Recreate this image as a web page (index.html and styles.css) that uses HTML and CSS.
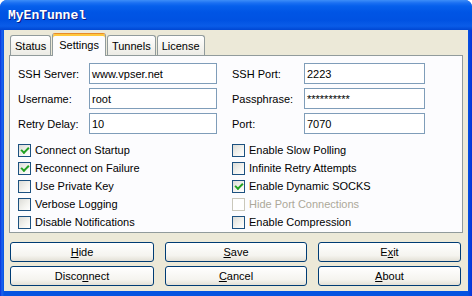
FILE: index.html
```html
<!DOCTYPE html>
<html lang="en">
<head>
    <meta charset="UTF-8">
    <title>MyEnTunnel</title>
    <link rel="stylesheet" href="styles.css">
</head>
<body>
    <div class="window">
        <div class="titlebar">
            <span class="title">MyEnTunnel</span>
        </div>

        <div class="client">
            <div class="tabs">
                <div class="tab">Status</div>
                <div class="tab active">Settings</div>
                <div class="tab">Tunnels</div>
                <div class="tab">License</div>
            </div>

            <div class="panel">
                <div class="form-row">
                    <div class="form left">
                        <span class="label">SSH Server:</span>
                        <div class="field">www.vpser.net</div>
                        <span class="label">Username:</span>
                        <div class="field">root</div>
                        <span class="label">Retry Delay:</span>
                        <div class="field">10</div>
                    </div>
                    <div class="form right">
                        <span class="label">SSH Port:</span>
                        <div class="field">2223</div>
                        <span class="label">Passphrase:</span>
                        <div class="field">**********</div>
                        <span class="label">Port:</span>
                        <div class="field">7070</div>
                    </div>
                </div>

                <div class="options">
                    <div class="option-col left">
                        <div class="check checked"><span class="box"></span>Connect on Startup</div>
                        <div class="check checked"><span class="box"></span>Reconnect on Failure</div>
                        <div class="check"><span class="box"></span>Use Private Key</div>
                        <div class="check"><span class="box"></span>Verbose Logging</div>
                        <div class="check"><span class="box"></span>Disable Notifications</div>
                    </div>
                    <div class="option-col">
                        <div class="check"><span class="box"></span>Enable Slow Polling</div>
                        <div class="check"><span class="box"></span>Infinite Retry Attempts</div>
                        <div class="check checked"><span class="box"></span>Enable Dynamic SOCKS</div>
                        <div class="check disabled"><span class="box"></span>Hide Port Connections</div>
                        <div class="check"><span class="box"></span>Enable Compression</div>
                    </div>
                </div>
            </div>

            <div class="buttons">
                <button class="btn"><u>H</u>ide</button>
                <button class="btn"><u>S</u>ave</button>
                <button class="btn">E<u>x</u>it</button>
                <button class="btn">Disco<u>n</u>nect</button>
                <button class="btn"><u>C</u>ancel</button>
                <button class="btn"><u>A</u>bout</button>
            </div>
        </div>
    </div>
</body>
</html>
```

FILE: styles.css
```css
* {
    margin: 0;
    padding: 0;
    box-sizing: border-box;
}

body {
    font-family: 'Liberation Sans', Arial, sans-serif;
    font-size: 11px;
    background: #ffffff;
    width: 472px;
    height: 296px;
    overflow: hidden;
}

.window {
    width: 472px;
    height: 296px;
    display: flex;
    flex-direction: column;
    padding: 0 4px 5px;
    background: linear-gradient(to right, #0831d9 0, #1c64f0 2px, #0553e1 4px, #0553e1 calc(100% - 4px), #0831d9 100%);
    border-radius: 7px 7px 0 0;
}

.titlebar {
    height: 30px;
    margin: 0 -4px;
    padding-left: 8px;
    display: flex;
    align-items: center;
    border-radius: 7px 7px 0 0;
    background: linear-gradient(#3d8ef8 0, #1a6ff2 3px, #0660ec 6px, #0055e5 12px, #0052e2 20px, #0a5ce8 26px, #0046d2 30px);
}

.title {
    font-family: 'Liberation Mono', monospace;
    font-weight: bold;
    font-size: 13px;
    color: #ffffff;
    text-shadow: 1px 1px 0 #0a1883;
}

.client {
    flex: 1;
    background: #ece9d8;
    padding: 3px 5px 5px 5px;
    display: flex;
    flex-direction: column;
}

.tabs {
    height: 22px;
    display: flex;
    align-items: flex-end;
    gap: 1px;
    padding-left: 1px;
    position: relative;
    z-index: 1;
}

.tab {
    height: 20px;
    padding: 0 4px;
    display: flex;
    align-items: center;
    border: 1px solid #919b9c;
    border-bottom: none;
    border-radius: 3px 3px 0 0;
    background: linear-gradient(#ffffff, #f4f3ee 60%, #ecebe5);
    color: #000000;
}

.tab.active {
    height: 23px;
    margin-bottom: -1px;
    padding: 0 6px;
    background: #fcfcfe;
    border-top-color: #e68b2c;
    box-shadow: inset 0 2px 0 #ffc73c;
}

.panel {
    height: 178px;
    background: #fcfcfe;
    border: 1px solid #919b9c;
    padding: 7px 8px 0;
}

.form-row {
    display: flex;
    gap: 15px;
}

.form {
    display: grid;
    grid-auto-rows: 21px;
    row-gap: 4px;
    align-items: center;
}

.form.left {
    grid-template-columns: 71px 128px;
}

.form.right {
    grid-template-columns: 72px 121px;
}

.label {
    color: #000000;
}

.field {
    height: 21px;
    border: 1px solid #7f9db9;
    background: #ffffff;
    padding-left: 2px;
    display: flex;
    align-items: center;
}

.options {
    display: flex;
    margin-top: 7px;
}

.option-col.left {
    width: 214px;
}

.check {
    height: 18px;
    display: flex;
    align-items: center;
    gap: 4px;
    color: #000000;
}

.box {
    width: 13px;
    height: 13px;
    border: 1px solid #1c5180;
    background: linear-gradient(135deg, #dcdcd7, #f4f4f0 60%, #ffffff);
    display: flex;
    align-items: center;
    justify-content: center;
}

.check.checked .box::after {
    content: "";
    width: 6px;
    height: 3px;
    margin-top: -2px;
    border-left: 2px solid #21a121;
    border-bottom: 2px solid #21a121;
    transform: rotate(-45deg);
}

.check.disabled {
    color: #aca899;
}

.check.disabled .box {
    border-color: #cac8bb;
    background: #ffffff;
}

.buttons {
    margin-top: 9px;
    display: grid;
    grid-template-columns: 144px 142px 143px;
    column-gap: 11px;
    row-gap: 4px;
    padding-left: 1px;
}

.btn {
    height: 20px;
    border: 1px solid #003c74;
    border-radius: 3px;
    background: linear-gradient(#ffffff, #f5f4ef 70%, #e3e0d6);
    font-family: 'Liberation Sans', Arial, sans-serif;
    font-size: 11px;
    color: #000000;
}
```
